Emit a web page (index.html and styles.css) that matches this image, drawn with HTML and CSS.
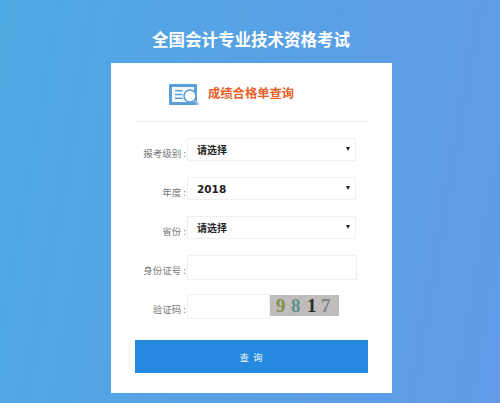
FILE: index.html
```html
<!DOCTYPE html>
<html lang="zh-CN">
<head>
<meta charset="utf-8">
<title>成绩合格单查询</title>
<link rel="stylesheet" href="styles.css">
</head>
<body>
<h1 class="page-title">全国会计专业技术资格考试</h1>
<main class="card">
  <header class="card-head">
    <svg class="logo" width="32" height="24" viewBox="0 0 32 24" aria-hidden="true">
      <rect x="0" y="1" width="28" height="21" rx="1" fill="#5a9fd8"/>
      <rect x="3" y="4" width="22" height="15" fill="#f4f9fd"/>
      <path d="M6 7h7.5v1.6H6zM6 10.7h7.5v1.6H6zM6 14.4h7.5V16H6z" fill="#5a9fd8"/>
      <circle cx="21" cy="13" r="6" fill="#fff" stroke="#5a9fd8" stroke-width="1.6"/>
      <path d="M25.2 17.3l4.3 4.5" stroke="#8fb9dc" stroke-width="2" fill="none"/>
    </svg>
    <h2 class="card-title">成绩合格单查询</h2>
  </header>
  <form class="form">
    <div class="row">
      <label class="label">报考级别 :</label>
      <div class="select-box"><span class="value">请选择</span><span class="arrow"></span></div>
    </div>
    <div class="row">
      <label class="label">年度 :</label>
      <div class="select-box"><span class="value year">2018</span><span class="arrow"></span></div>
    </div>
    <div class="row">
      <label class="label">省份 :</label>
      <div class="select-box"><span class="value">请选择</span><span class="arrow"></span></div>
    </div>
    <div class="row">
      <label class="label">身份证号 :</label>
      <div class="text-box"></div>
    </div>
    <div class="row row-code">
      <label class="label">验证码 :</label>
      <div class="text-box short"></div>
      <svg class="captcha" width="69" height="21" viewBox="0 0 69 21" role="img" aria-label="9817">
        <defs>
          <filter id="noise" x="0" y="0" width="100%" height="100%">
            <feTurbulence type="fractalNoise" baseFrequency="0.9" numOctaves="2" seed="4"/>
            <feColorMatrix type="matrix" values="0 0 0 0 0.45  0 0 0 0 0.44  0 0 0 0 0.43  1.6 0 0 0 -0.45"/>
          </filter>
        </defs>
        <rect width="69" height="21" fill="#c6c3c2"/>
        <rect width="69" height="21" filter="url(#noise)"/>
        <text class="digit" x="6" y="17" fill="#7f8f4a">9</text>
        <text class="digit" x="21" y="17" fill="#5f8f8a">8</text>
        <text class="digit" x="37" y="17" fill="#2a2a2a">1</text>
        <text class="digit" x="51" y="17" fill="#7a8480">7</text>
      </svg>
    </div>
    <div class="submit">查 询</div>
  </form>
</main>
</body>
</html>
```

FILE: styles.css
```css
* { box-sizing: border-box; }
html, body { height: 100%; }
body {
  margin: 0;
  height: 403px;
  overflow: hidden;
  display: flex;
  flex-direction: column;
  align-items: flex-start;
  background: linear-gradient(100deg, #4eaae2 0%, #5a9fe6 60%, #629ae8 100%);
  font-family: "Noto Sans CJK SC", "Liberation Sans", sans-serif;
}
.page-title {
  margin: 0;
  width: 100%;
  height: 63px;
  padding: 26px 0 0 2px;
  text-align: center;
  font-size: 16.5px;
  line-height: 26px;
  font-weight: 700;
  color: #fff;
}
.card {
  margin-left: 111px;
  width: 281px;
  height: 330px;
  background: #fff;
  padding: 0 24px;
}
.card-head {
  display: flex;
  align-items: center;
  margin: 0 0 0 1px;
  height: 59px;
  width: 232px;
  padding: 5px 0 0 33px;
  border-bottom: 1px solid #ececec;
}
.logo { flex: none; margin-right: 7px; }
.card-title {
  margin: 0 0 3px;
  font-size: 12.3px;
  font-weight: 700;
  color: #e8622a;
}
.form { display: flex; flex-direction: column; padding-top: 16px; }
.row { display: flex; align-items: flex-start; height: 39px; }
.row-code { height: 46px; }
.label {
  width: 51px;
  margin-right: 1px;
  flex: none;
  padding-top: 6px;
  text-align: right;
  font-size: 9.5px;
  line-height: 18px;
  color: #777;
  white-space: nowrap;
}
.select-box {
  position: relative;
  width: 169px;
  height: 23px;
  border: 1px solid #f0f0f0;
  display: flex;
  align-items: center;
  padding-left: 9px;
}
.value { font-size: 10px; font-weight: 700; color: #222; }
.value.year { font-size: 10.5px; font-family: "DejaVu Sans", sans-serif; }
.arrow {
  position: absolute;
  right: 5px;
  top: 8px;
  width: 0;
  height: 0;
  border-left: 2px solid transparent;
  border-right: 2px solid transparent;
  border-top: 4px solid #222;
}
.text-box {
  width: 170px;
  height: 25px;
  border: 1px solid #f0f0f0;
  background: #fff;
}
.text-box.short { width: 83px; }
.captcha { display: block; flex: none; margin-top: 1px; }
.digit { font-family: "Liberation Serif", serif; font-size: 19px; font-weight: 700; }
.submit {
  width: 233px;
  height: 33px;
  background: #2589e0;
  color: #eef6fd;
  font-size: 9.5px;
  line-height: 34px;
  text-align: center;
  letter-spacing: 1px;
}
```
